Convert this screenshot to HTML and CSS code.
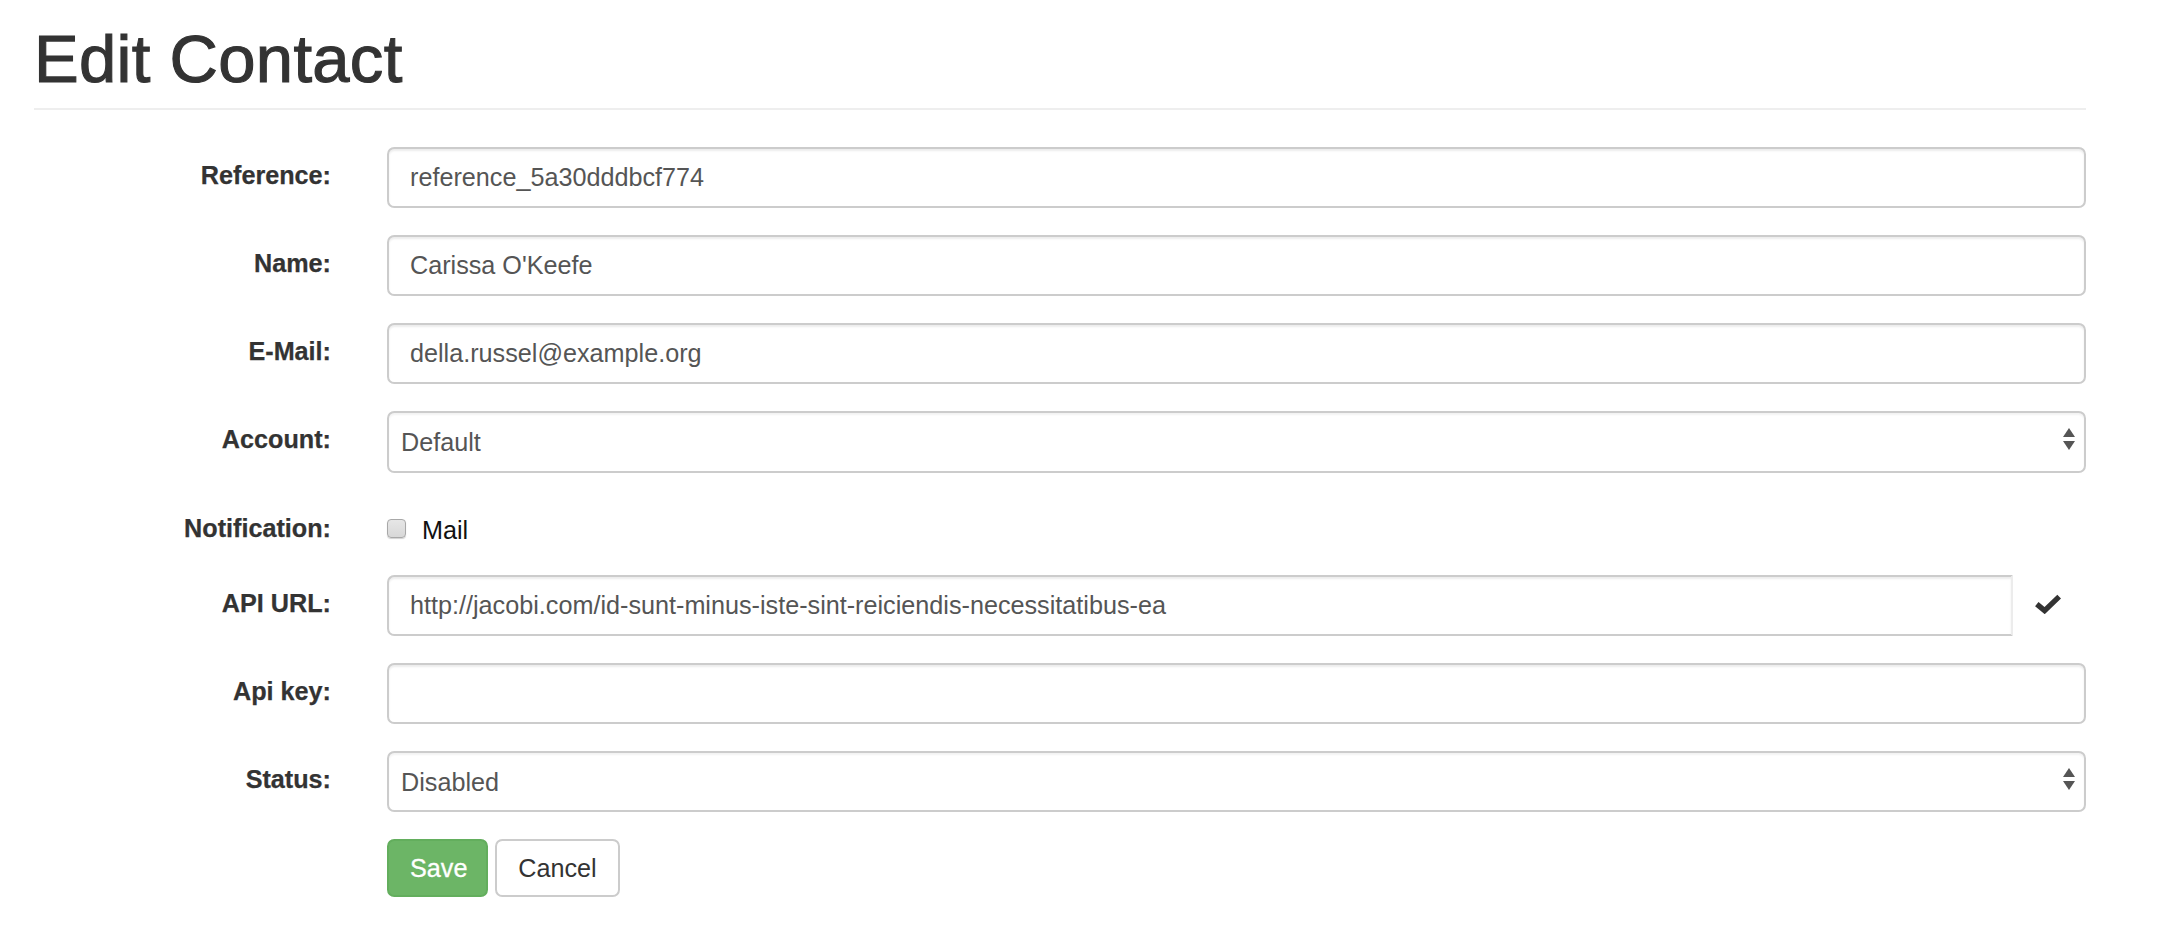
FILE: index.html
```html
<!DOCTYPE html>
<html lang="en">
<head>
<meta charset="utf-8">
<title>Edit Contact</title>
<link rel="stylesheet" href="styles.css">
</head>
<body>
<div class="page">
  <header class="page-header">
    <h1>Edit Contact</h1>
  </header>

  <form class="contact-form">
    <div class="form-group">
      <label class="control-label" for="reference">Reference:</label>
      <input class="form-control" id="reference" type="text" value="reference_5a30dddbcf774">
    </div>

    <div class="form-group">
      <label class="control-label" for="name">Name:</label>
      <input class="form-control" id="name" type="text" value="Carissa O'Keefe">
    </div>

    <div class="form-group">
      <label class="control-label" for="email">E-Mail:</label>
      <input class="form-control" id="email" type="text" value="della.russel@example.org">
    </div>

    <div class="form-group">
      <label class="control-label" for="account">Account:</label>
      <div class="select-wrap">
        <select class="form-control select-control" id="account">
          <option>Default</option>
        </select>
        <svg class="select-arrows" width="12" height="22" viewBox="0 0 12 22" aria-hidden="true">
          <polygon points="0,9 6,0 12,9"/>
          <polygon points="0,13 12,13 6,22"/>
        </svg>
      </div>
    </div>

    <div class="form-group form-group-check">
      <span class="control-label">Notification:</span>
      <div class="check-line">
        <input class="check-box" id="notify-mail" type="checkbox">
        <label class="check-text" for="notify-mail">Mail</label>
      </div>
    </div>

    <div class="form-group">
      <label class="control-label" for="api-url">API URL:</label>
      <div class="input-group">
        <input class="form-control group-control" id="api-url" type="text" value="http://jacobi.com/id-sunt-minus-iste-sint-reiciendis-necessitatibus-ea">
        <span class="group-addon">
          <svg width="26" height="20" viewBox="0 0 26 20" aria-hidden="true">
            <polyline points="1.8,10.2 9.6,16.6 24.2,2.6" fill="none" stroke="#333" stroke-width="5.4" stroke-linejoin="miter"/>
          </svg>
        </span>
      </div>
    </div>

    <div class="form-group">
      <label class="control-label" for="api-key">Api key:</label>
      <input class="form-control" id="api-key" type="text" value="">
    </div>

    <div class="form-group">
      <label class="control-label" for="status">Status:</label>
      <div class="select-wrap">
        <select class="form-control select-control" id="status">
          <option>Disabled</option>
        </select>
        <svg class="select-arrows" width="12" height="22" viewBox="0 0 12 22" aria-hidden="true">
          <polygon points="0,9 6,0 12,9"/>
          <polygon points="0,13 12,13 6,22"/>
        </svg>
      </div>
    </div>

    <div class="form-group form-actions">
      <span></span>
      <div class="buttons">
        <button class="btn btn-success" type="button">Save</button>
        <button class="btn btn-default" type="button">Cancel</button>
      </div>
    </div>
  </form>
</div>
</body>
</html>
```

FILE: styles.css
```css
html, body {
  margin: 0;
  padding: 0;
  background: #fff;
}

body {
  font-family: "Liberation Sans", Arial, Helvetica, sans-serif;
  font-size: 25.2px;
  line-height: 36px;
  color: #333;
}

.page {
  padding: 22px 84px 0 34px;
}

/* heading with its bottom rule */
.page-header {
  border-bottom: 2px solid #eee;
  padding-bottom: 12.4px;
}

.page-header h1 {
  margin: 0;
  font-size: 67px;
  line-height: 74px;
  font-weight: 500;
  color: #333;
  -webkit-text-stroke: 1.1px #333;
  letter-spacing: 0.3px;
}

/* horizontal form: right-aligned labels, fields in the wide column */
.contact-form {
  margin-top: 36.5px;
}

.form-group {
  display: grid;
  grid-template-columns: 297px 1fr;
  column-gap: 56px;
  margin-bottom: 27px;
}

.control-label {
  display: block;
  text-align: right;
  font-weight: 700;
  padding-top: 10px;
  line-height: 36px;
  -webkit-text-stroke: 0.25px #333;
}

.form-control {
  display: block;
  box-sizing: border-box;
  width: 100%;
  height: 61.2px;
  margin: 0;
  padding: 10.8px 21px;
  font-family: inherit;
  font-size: 25.2px;
  line-height: 36px;
  color: #555;
  background: #fff;
  border: 2px solid #ccc;
  border-radius: 7.2px;
  box-shadow: inset 0 2px 2px rgba(0, 0, 0, 0.075);
  outline: none;
}

/* selects with the stacked up/down arrows */
.select-wrap {
  position: relative;
}

.select-control {
  -webkit-appearance: none;
  appearance: none;
  padding-left: 12px;
  padding-right: 40px;
  box-shadow: inset 0 2px 2px rgba(0, 0, 0, 0.05);
}

.select-arrows {
  position: absolute;
  right: 11px;
  top: 17px;
  fill: #555;
  pointer-events: none;
}

/* checkbox row */
.form-group-check .check-line {
  display: flex;
  align-items: flex-start;
  padding-top: 12px;
  line-height: 36px;
}

.check-box {
  -webkit-appearance: none;
  appearance: none;
  box-sizing: border-box;
  width: 19px;
  height: 19px;
  margin: 7px 16px 0 0;
  border: 1px solid #a8a8a8;
  border-radius: 4px;
  background: linear-gradient(#e6e6e6, #d8d8d8);
  box-shadow: 0 1px 1px rgba(0, 0, 0, 0.18);
}

.check-text {
  color: #111;
  font-weight: 400;
}

/* url field with the validation tick */
.input-group {
  display: flex;
}

.group-control {
  flex: 1;
  border-radius: 7.2px 0 0 7.2px;
  border-right-color: #ececec;
}

.group-addon {
  display: flex;
  align-items: center;
  justify-content: center;
  width: 73px;
  flex: none;
}

.group-addon svg {
  margin-right: 4px;
  margin-bottom: 2px;
}

/* action buttons */
.form-actions {
  margin-bottom: 0;
}

.buttons {
  display: flex;
  gap: 7px;
}

.btn {
  box-sizing: border-box;
  height: 58px;
  padding: 0 21px;
  border: 2px solid transparent;
  border-radius: 7.2px;
  font-family: inherit;
  font-size: 25.2px;
  line-height: 54px;
  cursor: pointer;
}

.btn-success {
  width: 101px;
  color: #fff;
  background: #6cb566;
  border-color: #63ae5d;
  -webkit-text-stroke: 0.3px #fff;
}

.btn-default {
  width: 125px;
  color: #333;
  background: #fff;
  border-color: #ccc;
}
```
